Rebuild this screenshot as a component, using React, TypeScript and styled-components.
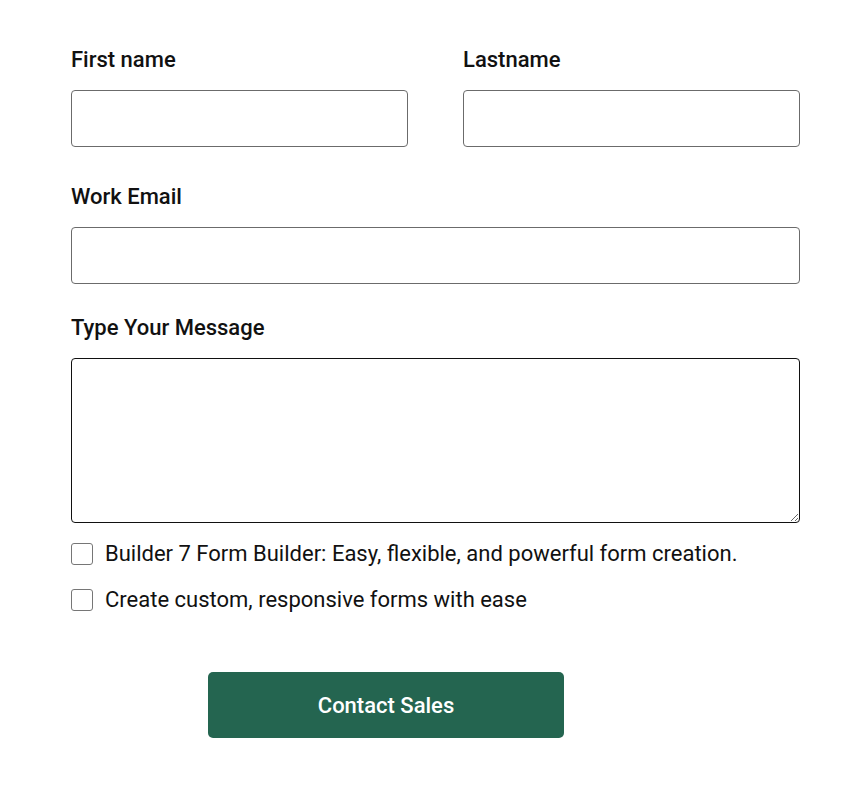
import React, { useState } from 'react';
import styled, { createGlobalStyle } from 'styled-components';

const GlobalStyle = createGlobalStyle`
  body {
    margin: 0;
    background: #FFFFFF;
    font-family: Roboto, "Noto Sans", Arial, sans-serif;
    color: #111111;
  }
`;

const Form = styled.form`
  width: 729px;
  padding: 48px 0 0 71px;
  display: flex;
  flex-direction: column;
`;

const Row = styled.div`
  display: grid;
  grid-template-columns: 337px 337px;
  column-gap: 55px;
`;

const Field = styled.div<{ $gap: number }>`
  display: flex;
  flex-direction: column;
  margin-bottom: ${(p) => p.$gap}px;
`;

const Label = styled.label`
  font-size: 22px;
  line-height: 24px;
  font-weight: 500;
  color: #111111;
  margin-bottom: 18px;
`;

const TextInput = styled.input`
  box-sizing: border-box;
  height: 57px;
  width: 100%;
  border: 1px solid #6B6B6B;
  border-radius: 4px;
  padding: 0 14px;
  font-family: inherit;
  font-size: 20px;
  outline: none;
`;

const MessageBox = styled.textarea`
  box-sizing: border-box;
  display: block;
  height: 165px;
  width: 100%;
  border: 1px solid #111111;
  border-radius: 4px;
  padding: 12px 14px;
  font-family: inherit;
  font-size: 20px;
  outline: none;
  resize: vertical;
`;

const Checks = styled.div`
  display: flex;
  flex-direction: column;
  gap: 22px;
  margin-top: 19px;
`;

const CheckRow = styled.label`
  display: flex;
  align-items: center;
  gap: 12px;
  font-size: 22px;
  line-height: 24px;
  color: #111111;
  cursor: pointer;
`;

const Box = styled.input`
  appearance: none;
  margin: 0;
  width: 22px;
  height: 22px;
  border: 1.5px solid #767676;
  border-radius: 3px;
  background: #FFFFFF;
  cursor: pointer;

  &:checked {
    background: #236550;
    border-color: #236550;
  }
`;

const Submit = styled.button`
  margin: 60px 0 0 137px;
  width: 356px;
  height: 66px;
  border: none;
  border-radius: 5px;
  background: #246550;
  color: #FFFFFF;
  font-family: inherit;
  font-size: 22px;
  font-weight: 500;
  cursor: pointer;
`;

export default function App() {
  const [checks, setChecks] = useState([false, false]);

  const toggle = (i: number) =>
    setChecks((prev) => prev.map((v, idx) => (idx === i ? !v : v)));

  return (
    <>
      <GlobalStyle />
      <Form onSubmit={(e) => e.preventDefault()}>
        <Row>
          <Field $gap={38}>
            <Label htmlFor="first">First name</Label>
            <TextInput id="first" type="text" />
          </Field>
          <Field $gap={38}>
            <Label htmlFor="last">Lastname</Label>
            <TextInput id="last" type="text" />
          </Field>
        </Row>
        <Field $gap={32}>
          <Label htmlFor="email">Work Email</Label>
          <TextInput id="email" type="email" />
        </Field>
        <Field $gap={0}>
          <Label htmlFor="msg">Type Your Message</Label>
          <MessageBox id="msg" />
        </Field>
        <Checks>
          <CheckRow>
            <Box type="checkbox" checked={checks[0]} onChange={() => toggle(0)} />
            Builder 7 Form Builder: Easy, flexible, and powerful form creation.
          </CheckRow>
          <CheckRow>
            <Box type="checkbox" checked={checks[1]} onChange={() => toggle(1)} />
            Create custom, responsive forms with ease
          </CheckRow>
        </Checks>
        <Submit type="submit">Contact Sales</Submit>
      </Form>
    </>
  );
}
